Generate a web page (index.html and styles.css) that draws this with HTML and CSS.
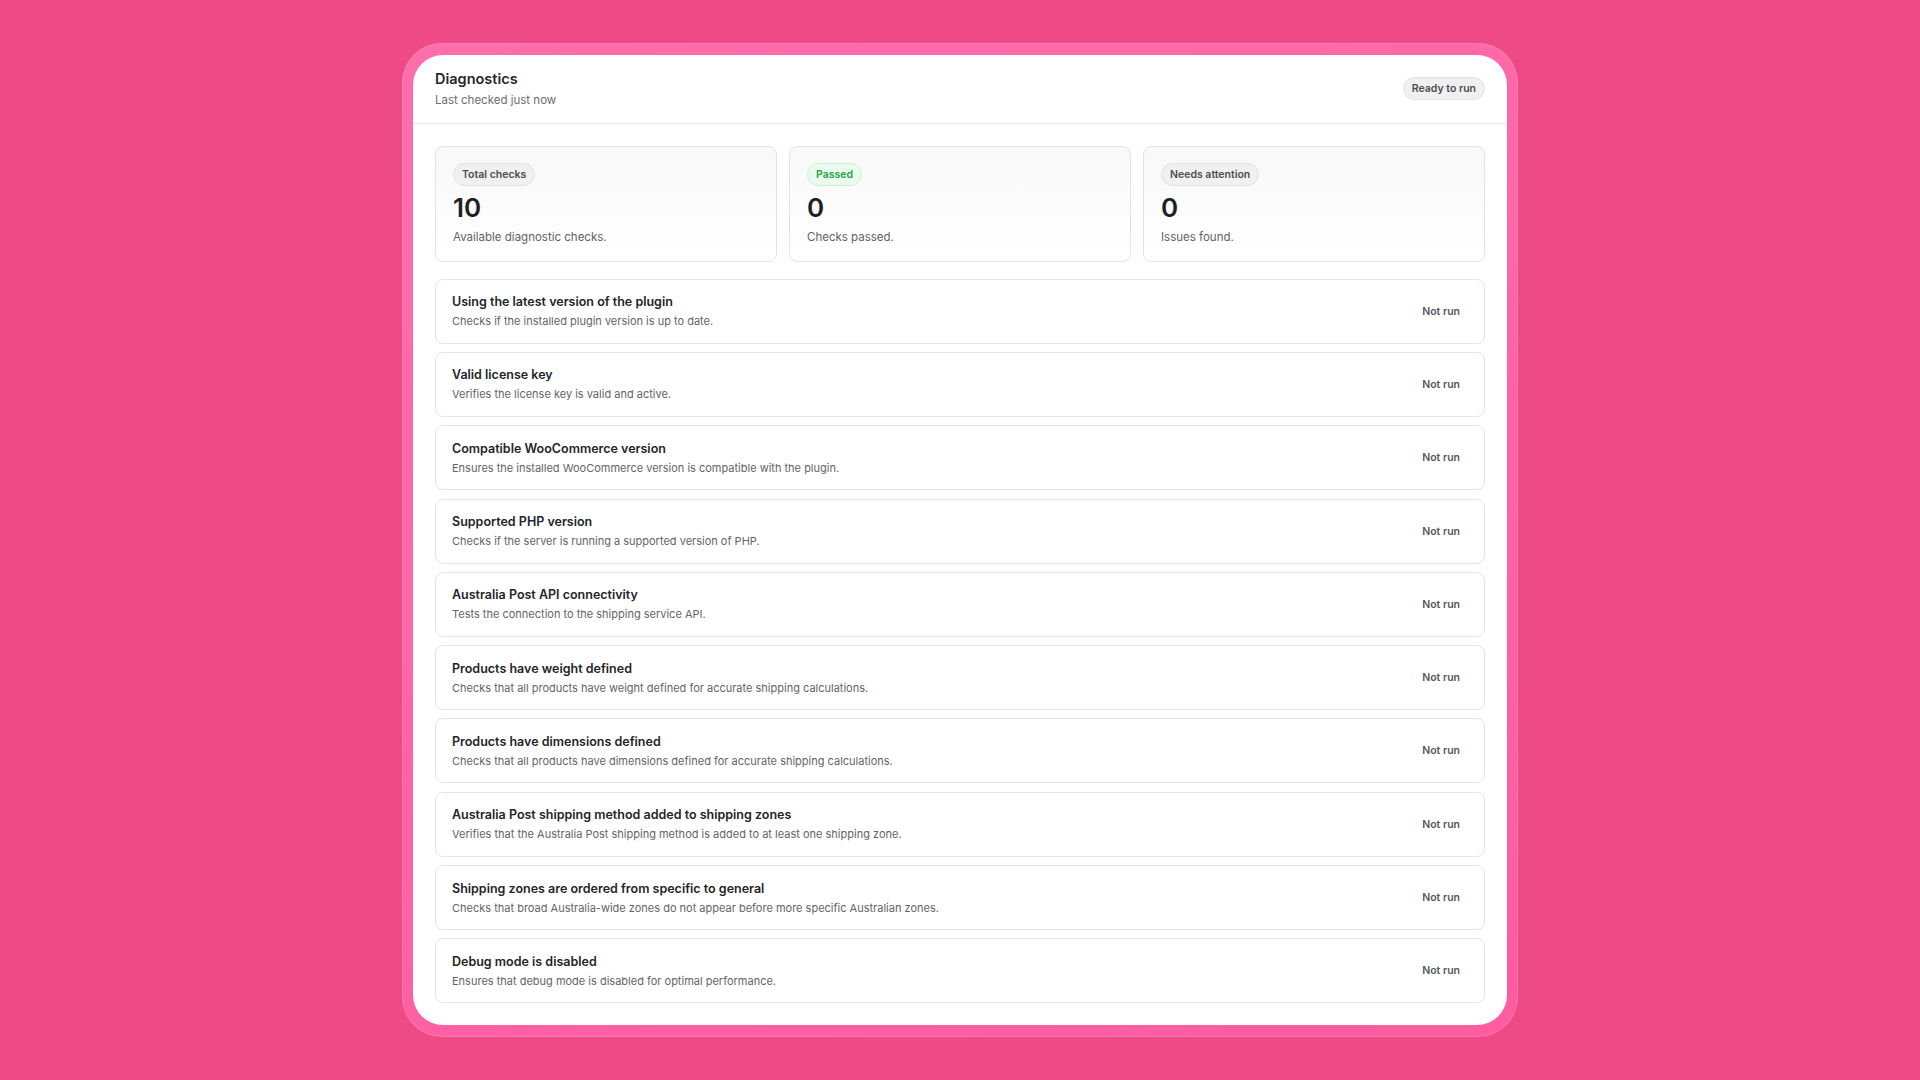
FILE: index.html
```html
<!DOCTYPE html>
<html lang="en">
<head>
    <meta charset="UTF-8">
    <title>Diagnostics</title>
    <link rel="stylesheet" href="styles.css">
</head>
<body>

    <div class="frame">
        <div class="panel">
            <!--header-->
            <div class="head">
                <div>
                    <h2 class="title">Diagnostics</h2>
                    <p class="sub">Last checked just now</p>
                </div>
                <span class="pill">Ready to run</span>
            </div>

            <div class="body">
                <!--summary cards-->
                <div class="stats">
                    <div class="stat">
                        <span class="pill">Total checks</span>
                        <p class="num">10</p>
                        <p class="note">Available diagnostic checks.</p>
                    </div>
                    <div class="stat">
                        <span class="pill ok">Passed</span>
                        <p class="num">0</p>
                        <p class="note">Checks passed.</p>
                    </div>
                    <div class="stat">
                        <span class="pill">Needs attention</span>
                        <p class="num">0</p>
                        <p class="note">Issues found.</p>
                    </div>
                </div>

                <!--check list-->
                <ul class="checks">
                    <li>
                        <div>
                            <h4>Using the latest version of the plugin</h4>
                            <p>Checks if the installed plugin version is up to date.</p>
                        </div>
                        <span class="state">Not run</span>
                    </li>
                    <li>
                        <div>
                            <h4>Valid license key</h4>
                            <p>Verifies the license key is valid and active.</p>
                        </div>
                        <span class="state">Not run</span>
                    </li>
                    <li>
                        <div>
                            <h4>Compatible WooCommerce version</h4>
                            <p>Ensures the installed WooCommerce version is compatible with the plugin.</p>
                        </div>
                        <span class="state">Not run</span>
                    </li>
                    <li>
                        <div>
                            <h4>Supported PHP version</h4>
                            <p>Checks if the server is running a supported version of PHP.</p>
                        </div>
                        <span class="state">Not run</span>
                    </li>
                    <li>
                        <div>
                            <h4>Australia Post API connectivity</h4>
                            <p>Tests the connection to the shipping service API.</p>
                        </div>
                        <span class="state">Not run</span>
                    </li>
                    <li>
                        <div>
                            <h4>Products have weight defined</h4>
                            <p>Checks that all products have weight defined for accurate shipping calculations.</p>
                        </div>
                        <span class="state">Not run</span>
                    </li>
                    <li>
                        <div>
                            <h4>Products have dimensions defined</h4>
                            <p>Checks that all products have dimensions defined for accurate shipping calculations.</p>
                        </div>
                        <span class="state">Not run</span>
                    </li>
                    <li>
                        <div>
                            <h4>Australia Post shipping method added to shipping zones</h4>
                            <p>Verifies that the Australia Post shipping method is added to at least one shipping zone.</p>
                        </div>
                        <span class="state">Not run</span>
                    </li>
                    <li>
                        <div>
                            <h4>Shipping zones are ordered from specific to general</h4>
                            <p>Checks that broad Australia-wide zones do not appear before more specific Australian zones.</p>
                        </div>
                        <span class="state">Not run</span>
                    </li>
                    <li>
                        <div>
                            <h4>Debug mode is disabled</h4>
                            <p>Ensures that debug mode is disabled for optimal performance.</p>
                        </div>
                        <span class="state">Not run</span>
                    </li>
                </ul>
            </div>
        </div>
    </div>

</body>
</html>
```

FILE: styles.css
```css
body{font-family: Inter,"Liberation Sans",sans-serif;margin:0;}
h2,h4,p{margin:0;}
ul,li{margin:0;padding:0;list-style:none;}

body{
    display: flex;
    align-items: center;
    justify-content: center;
    min-height: 100vh;
    background-color: #ee4a86;
    color: #1f2124;
}

/* pink bezel round the panel */
.frame{
    width: 1094px;
    padding: 12px 11px;
    border-radius: 40px;
    background: linear-gradient(160deg,#ff6dab,#fd5c9f);
    box-shadow: inset 0 0 0 1px rgba(255,255,255,.15);
}
.panel{
    background-color: #fff;
    border-radius: 30px;
    overflow: hidden;
}

.head{
    display: flex;
    align-items: center;
    justify-content: space-between;
    padding: 14px 22px 15px;
    border-bottom: 1px solid #e6e6e6;
}
.head .title{
    font-size: 14.5px;
    line-height: 20px;
    font-weight: 600;
    color: #26282b;
}
.head .sub{
    margin-top: 3px;
    font-size: 11.5px;
    line-height: 16px;
    color: #6a6d72;
}

.pill{
    display: inline-block;
    box-sizing: border-box;
    height: 23px;
    padding: 0 8px;
    border: 1px solid #e1e1e1;
    border-radius: 12px;
    background-color: #f0f0f0;
    font-size: 10.5px;
    line-height: 21px;
    font-weight: 600;
    color: #4a4d52;
}
.pill.ok{
    border-color: #c9efd3;
    background-color: #eafaee;
    color: #22a447;
}

.body{
    padding: 22px 22px 22px;
}

.stats{
    display: grid;
    grid-template-columns: repeat(3,1fr);
    gap: 12px;
}
.stat{
    height: 116px;
    box-sizing: border-box;
    padding: 15px 17px 13px;
    border: 1px solid #e3e3e3;
    border-radius: 8px;
    background: linear-gradient(180deg,#f8f8f8,#fff);
}
.stat .num{
    margin-top: 6px;
    font-size: 26px;
    line-height: 32px;
    font-weight: 600;
    color: #1d1f22;
}
.stat .note{
    margin-top: 4px;
    font-size: 11.5px;
    line-height: 18px;
    color: #5f6267;
}

.checks{
    display: flex;
    flex-direction: column;
    gap: 8.3px;
    margin-top: 17px;
}
.checks li{
    display: flex;
    align-items: center;
    justify-content: space-between;
    height: 65px;
    box-sizing: border-box;
    padding: 0 24px 0 16px;
    border: 1px solid #e4e4e4;
    border-radius: 8px;
}
.checks h4{
    font-size: 12.5px;
    line-height: 18px;
    font-weight: 600;
    color: #232528;
}
.checks p{
    margin-top: 2px;
    font-size: 11px;
    line-height: 16px;
    color: #62656a;
}
.checks .state{
    font-size: 10.5px;
    font-weight: 600;
    color: #55585d;
}
```
